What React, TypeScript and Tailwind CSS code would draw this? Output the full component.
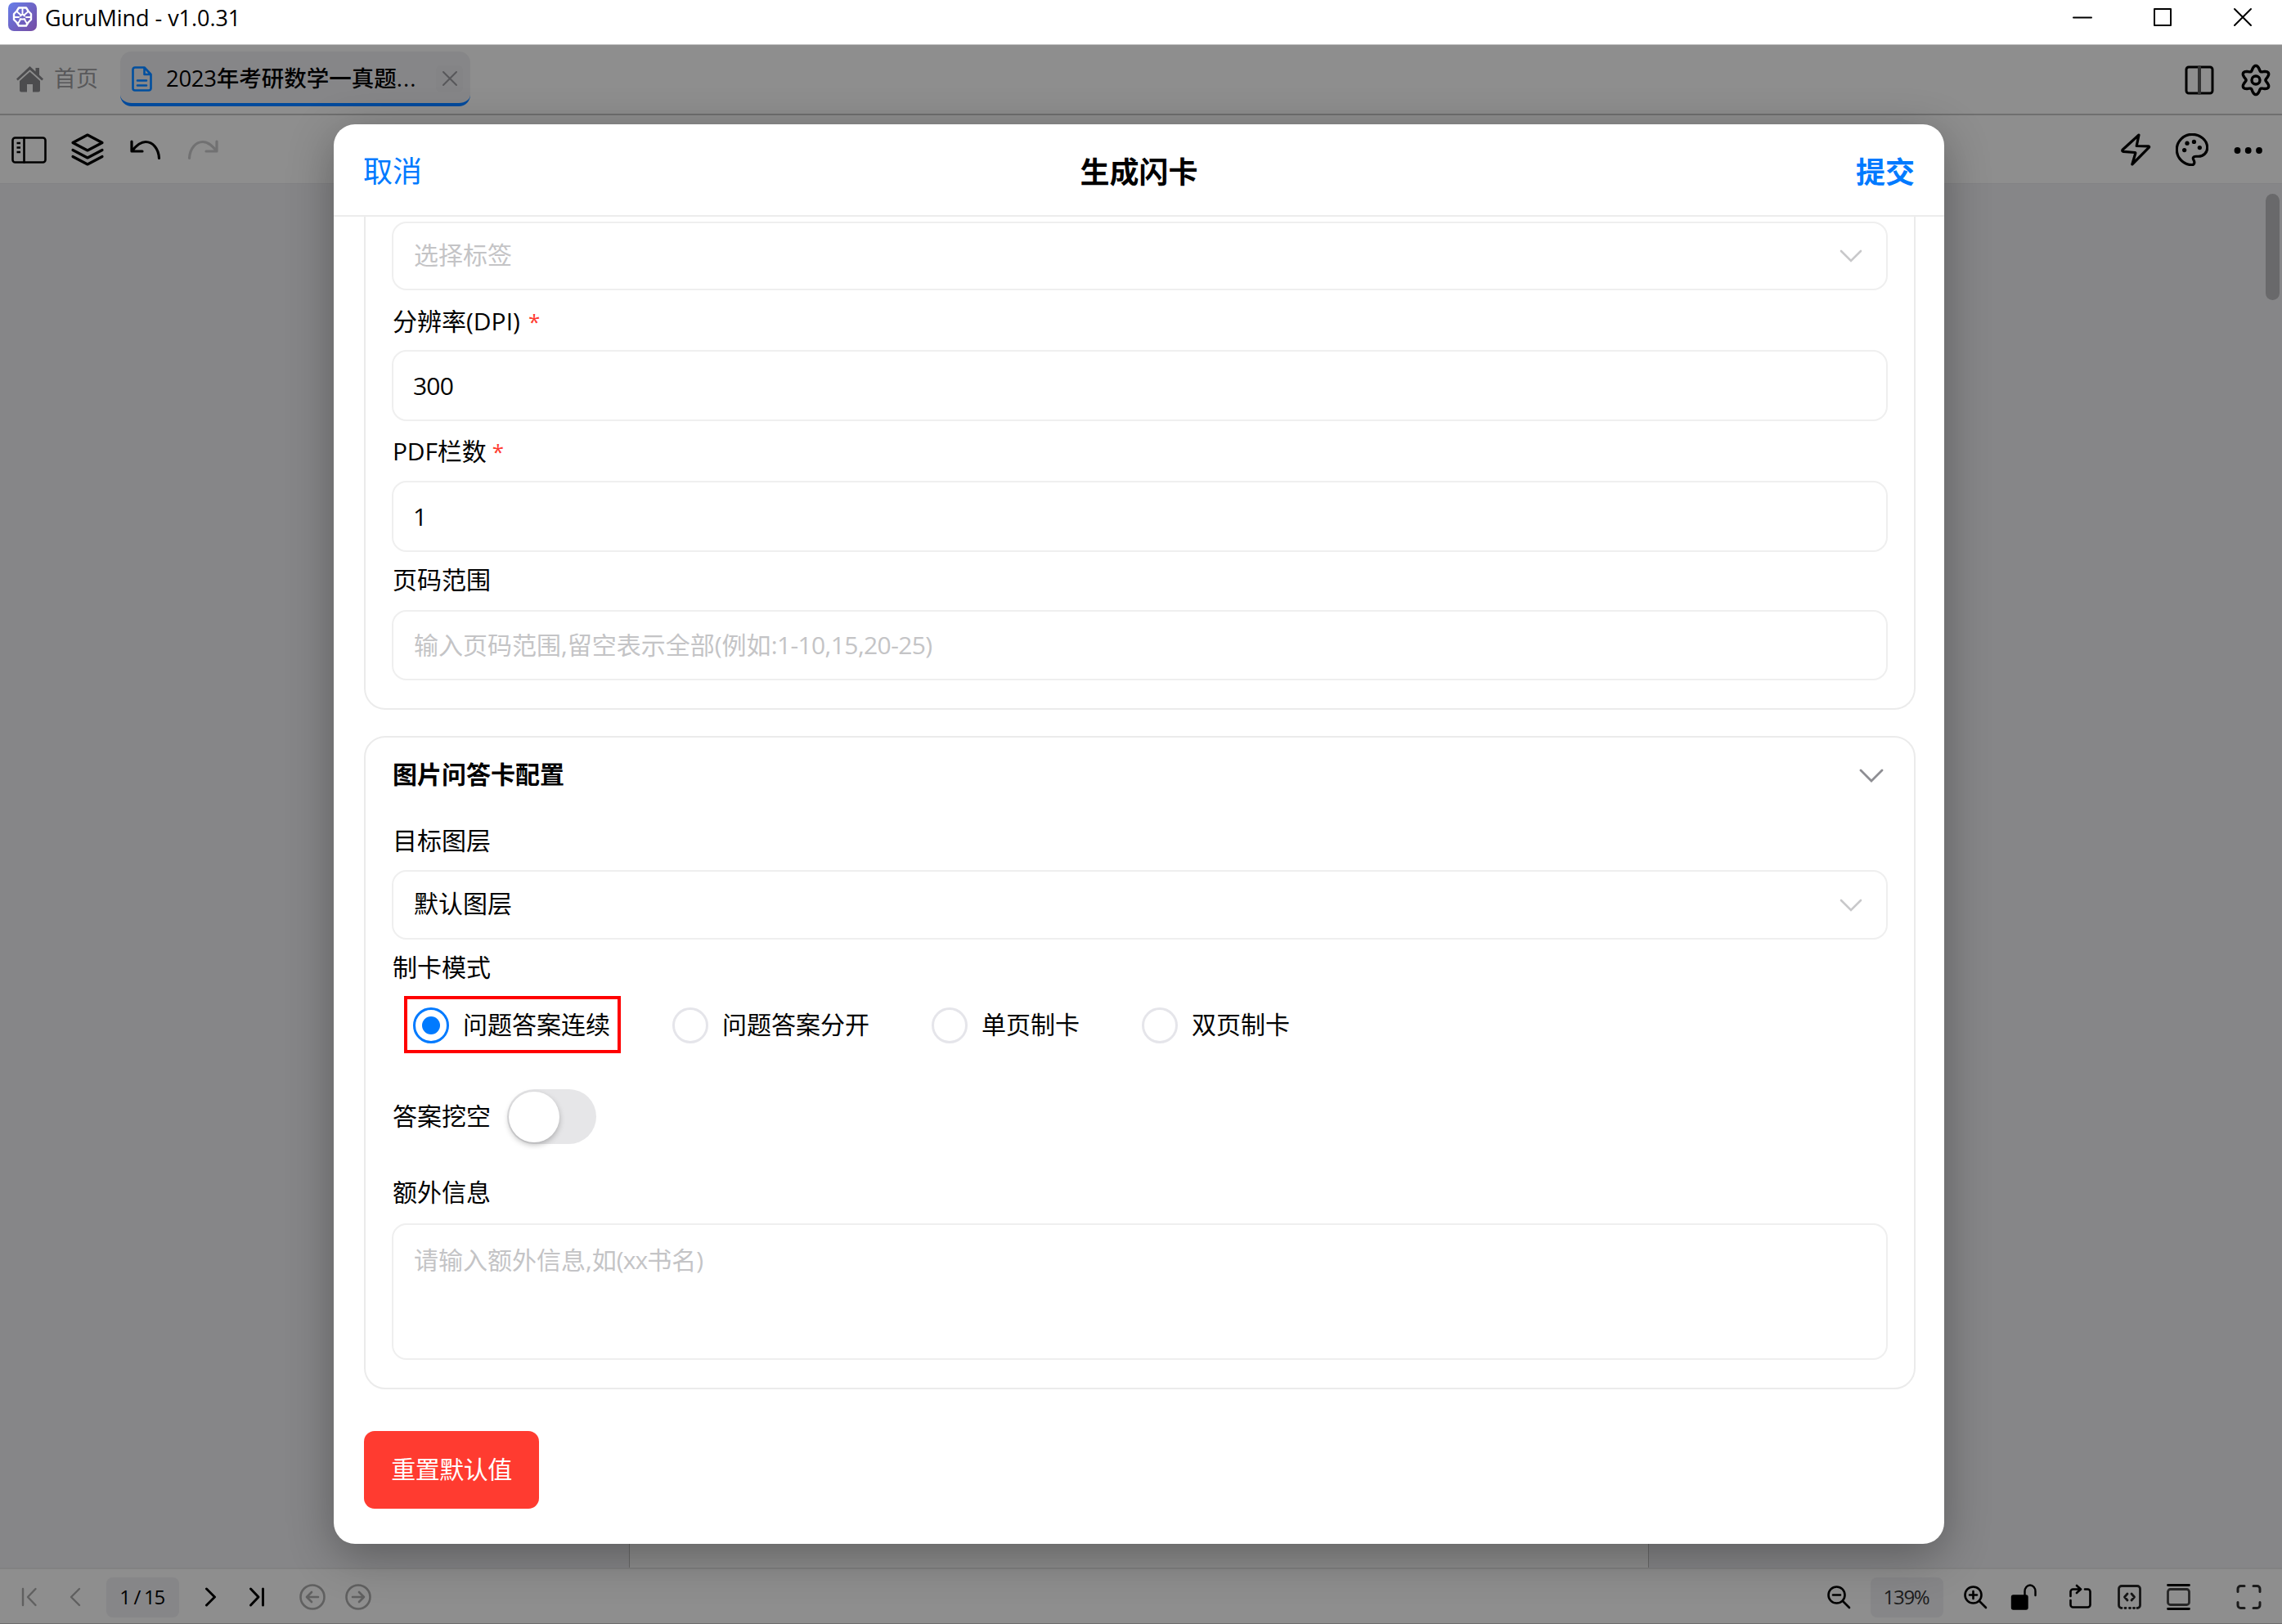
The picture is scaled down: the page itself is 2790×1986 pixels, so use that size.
import type { ReactNode } from 'react';

const gearPath = (() => {
  const pts: string[] = [];
  for (let i = 0; i < 120; i++) {
    const a = (i / 120) * Math.PI * 2 - Math.PI / 2;
    const r = 14.8 + 2.9 * Math.cos(6 * (a + Math.PI / 2));
    pts.push(`${(20 + r * Math.cos(a)).toFixed(2)} ${(20 + r * Math.sin(a)).toFixed(2)}`);
  }
  return `M${pts.join('L')}Z`;
})();

type IconProps = { w: number; h: number; sw?: number; className?: string; children: ReactNode };

// Stroke icon drawn at one unit per pixel.
function Icon({ w, h, sw = 3, className = '', children }: IconProps) {
  return (
    <svg
      width={w}
      height={h}
      viewBox={`0 0 ${w} ${h}`}
      fill="none"
      stroke="currentColor"
      strokeWidth={sw}
      strokeLinecap="round"
      strokeLinejoin="round"
      className={`shrink-0 overflow-visible ${className}`}
    >
      {children}
    </svg>
  );
}

function TitleBar() {
  return (
    <header className="flex h-[55px] shrink-0 items-start border-b border-[#c4c4c4] bg-white pl-[10px] text-black">
      <svg width="35" height="35" viewBox="0 0 35 35" className="mt-[3px] shrink-0">
        <defs>
          <linearGradient id="logo" x1="0" y1="0" x2="1" y2="1">
            <stop offset="0" stopColor="#667eea" />
            <stop offset="1" stopColor="#764ba2" />
          </linearGradient>
        </defs>
        <rect width="35" height="35" rx="7" fill="url(#logo)" />
        <path
          d="M13 6.500h9l2.500 4 3.500 3.500v7l-3.500 3.500-2.500 4h-9l-2.500-4L7 21v-7l3.500-3.500z"
          fill="none"
          stroke="#fff"
          strokeWidth="2.400"
          strokeLinejoin="round"
        />
        <path
          d="M17.500 8v5M11 11.500l4 3.500M24 11.500l-4 3.500M8 18h5M27 18h-5M12.500 25l3-5M22.500 25l-3-5M15 16.500l2.500-2.500 2.500 2.500M14.500 20.500h6"
          fill="none"
          stroke="#fff"
          strokeWidth="1.900"
          strokeLinecap="round"
        />
      </svg>
      <span className="ml-[10px] mt-[4px] text-[27px] leading-[36px] tracking-[-0.050px]">GuruMind - v1.0.31</span>
      <div className="ml-auto mr-[37px] mt-[10px] flex gap-[76px]">
        <Icon w={22} h={22} sw={2}>
          <path d="M0 11.500h22" />
        </Icon>
        <Icon w={22} h={22} sw={2}>
          <path d="M1 1h20v20H1z" />
        </Icon>
        <Icon w={22} h={22} sw={2}>
          <path d="M1 1l20 20M21 1L1 21" />
        </Icon>
      </div>
    </header>
  );
}

function TabBar() {
  return (
    <nav className="flex h-[86px] shrink-0 items-center border-b-2 border-[#6f6f6f] bg-[#8e8e8e] pl-[20px] pr-[12px]">
      <svg width="33" height="32" viewBox="0 0 33 32" className="shrink-0 text-[#4c4c4e]">
        <path d="M16.500 0L0 15.500l1.800 2L16.500 4.200l14.700 13.300 1.800-2-5-4.700V2h-4.500v4.600z" fill="currentColor" />
        <path d="M16.500 6.800L4 18v11.500A2 2 0 0 0 6 31.500h7V22h7v9.500h7a2 2 0 0 0 2-2V18z" fill="currentColor" />
      </svg>
      <span className="ml-[13px] pb-[2px] text-[27px] leading-[36px] text-[#58585a]">首页</span>
      <div className="ml-[27px] mt-[-1px] flex h-[67px] w-[428px] items-center rounded-[14px] border-b-4 border-[#004a9c] bg-[#868688] pl-[14px] pr-[9px] pt-[3px]">
        <Icon w={25} h={31} sw={2.6} className="text-[#004f9f]">
          <path d="M15.500 1.500H4A2.500 2.500 0 0 0 1.500 4v23A2.500 2.500 0 0 0 4 29.500h17a2.500 2.500 0 0 0 2.500-2.500V10zM15.500 1.500V10h8M7 17.500h11M7 23.500h11" />
        </Icon>
        <span className="ml-[17px] text-[27.5px] font-medium leading-[36px] text-black">
          <span className="tracking-[-0.300px]">2023</span>年考研数学一真题<span className="tracking-[1px]">...</span>
        </span>
        <span className="ml-auto flex h-[33px] w-[33px] shrink-0 items-center justify-center rounded-[6px] bg-[#848486] text-[#57575a]">
          <Icon w={18} h={18} sw={2}>
            <path d="M1 1l16 16M17 1L1 17" />
          </Icon>
        </span>
      </div>
      <div className="ml-auto flex items-center gap-[31px] pt-px text-black">
        <Icon w={36} h={36} sw={3}>
          <rect x="2" y="2" width="32" height="32" rx="3" />
          <path d="M18 2v32" strokeWidth="4" stroke="#333" />
        </Icon>
        <Icon w={40} h={40} sw={3.4}>
          <path d={gearPath} />
          <circle cx="20" cy="20" r="5" />
        </Icon>
      </div>
    </nav>
  );
}

function Toolbar() {
  return (
    <div className="flex h-[84px] shrink-0 items-center border-b border-[#828284] bg-[#8e8e8e] pl-[14px] pr-[24px] pt-px text-black">
      <Icon w={43} h={33} sw={2.6}>
        <rect x="1.500" y="1.500" width="40" height="30" rx="3" />
        <path d="M15.500 1.500v30" />
        <path d="M6.500 8h4.500M6.500 13.500h4.500M6.500 19h4.500" strokeLinecap="butt" />
      </Icon>
      <Icon w={40} h={40} sw={3.2} className="ml-[30px]">
        <path d="M20 2L38 11.500 20 21 2 11.500z" />
        <path d="M2 20.500L20 30l18-9.500M2 28.500L20 38l18-9.500" />
      </Icon>
      <Icon w={37} h={24} sw={3.2} className="ml-[32px]">
        <path d="M2 2v12h13M2.500 13.500C8 6.500 13 2.500 19 2.500 28 2.500 35 11 35.500 22.500" />
      </Icon>
      <Icon w={37} h={24} sw={3.2} className="ml-[34px] text-[#717172]">
        <path d="M35 2v12H22M34.500 13.500C29 6.500 24 2.500 18 2.500 9 2.500 2 11 1.500 22.500" />
      </Icon>
      <div className="ml-auto flex items-center gap-[31px]">
        <Icon w={36} h={40} sw={3.2}>
          <path d="M22 2L2 20.200q-1 1.800 1 2.200L17.200 23.500q.8.100.6 1L13.800 38 34.500 17.200q.6-1.200-.8-1.400L19.200 15.500z" />
        </Icon>
        <svg width="40" height="40" viewBox="1.300 1.300 21.400 21.400" fill="none" stroke="currentColor" strokeWidth="1.700" strokeLinejoin="round" className="shrink-0">
          <path d="M12 22a10 10 0 1 1 0-20c5.500 0 10 4 10 8.800 0 3.200-2.600 5.600-5.800 5.600h-1.700c-1.800 0-2.200 1-1.500 2.300.9 1.600.700 3.300-1 3.300z" />
          <g fill="currentColor" stroke="none">
            <circle cx="8.800" cy="7.800" r="1.400" />
            <circle cx="13.300" cy="6.900" r="1.400" />
            <circle cx="17" cy="10.700" r="1.400" />
            <circle cx="7" cy="12.300" r="1.400" />
          </g>
        </svg>
        <svg width="35" height="10" viewBox="0 0 35 10" fill="currentColor" className="shrink-0">
          <circle cx="4.500" cy="6" r="3.900" />
          <circle cx="17.700" cy="6" r="3.900" />
          <circle cx="31" cy="6" r="3.900" />
        </svg>
      </div>
    </div>
  );
}

function Canvas() {
  return (
    <div className="flex min-h-0 flex-1 justify-between bg-[#868688]">
      <div className="w-[769px]" />
      <div className="w-[1247px] border-x border-[#6a6a6a] bg-[#8e8e8e]" />
      <div className="flex flex-1 justify-end pr-[3px] pt-[12px]">
        <div className="h-[130px] w-[17px] rounded-full bg-[#69696b]" />
      </div>
    </div>
  );
}

function StatusBar() {
  return (
    <footer className="flex h-[69px] shrink-0 items-center border-b border-t-2 border-b-[#6c6c6c] border-t-[#828282] bg-[#8e8e8e] pl-[26px] pr-[25px] pt-[2px] text-black">
      <Icon w={19} h={22} sw={2.4} className="text-[#606060]">
        <path d="M2 1v20M17.500 1L8 11l9.500 10" />
      </Icon>
      <Icon w={13} h={22} sw={2.4} className="ml-[40px] text-[#606060]">
        <path d="M12 1L2 11l10 10" />
      </Icon>
      <span className="ml-[32px] flex h-[49px] w-[89px] items-center justify-center rounded-[8px] bg-[#868688] pr-[2px] text-[24px] font-medium tracking-[-1.300px]">
        1 / 15
      </span>
      <Icon w={13} h={22} sw={3} className="ml-[32px]">
        <path d="M1.500 1l10 10-10 10" />
      </Icon>
      <Icon w={18} h={22} sw={3} className="ml-[41px]">
        <path d="M1.500 1l9.500 10-9.500 10M16.500 1v20" />
      </Icon>
      <Icon w={32} h={32} sw={2.6} className="ml-[43px] text-[#606060]">
        <circle cx="16" cy="16" r="14.500" />
        <path d="M23 16H9M15 10l-6 6 6 6" />
      </Icon>
      <Icon w={32} h={32} sw={2.6} className="ml-[24px] text-[#606060]">
        <circle cx="16" cy="16" r="14.500" />
        <path d="M9 16H23M17 10l6 6-6 6" />
      </Icon>

      <Icon w={28} h={28} sw={2.6} className="ml-auto">
        <circle cx="11.500" cy="11.500" r="10" />
        <path d="M19 19l8 8M7 11.500h9" />
      </Icon>
      <span className="ml-[25px] flex h-[49px] w-[89px] items-center justify-center rounded-[8px] bg-[#868688] pr-[2px] text-[24px] tracking-[-1.300px] text-[#1c1c1c]">
        139%
      </span>
      <Icon w={28} h={28} sw={2.6} className="ml-[25px]">
        <circle cx="11.500" cy="11.500" r="10" />
        <path d="M19 19l8 8M7 11.500h9M11.500 7v9" />
      </Icon>
      <Icon w={31} h={32} sw={2.4} className="ml-[30px]">
        <rect x="1" y="14.500" width="18.500" height="16" rx="1.500" fill="currentColor" />
        <path d="M16.500 14V9a6.500 7.500 0 0 1 13 0v5" />
      </Icon>
      <Icon w={27} h={30} sw={2.6} className="ml-[40px]">
        <path d="M1.500 14v-5.500A3 3 0 0 1 4.500 5.500H13M9 1l5 4.500-5 4.500M19 5.500h3.500a3 3 0 0 1 3 3v16a3 3 0 0 1-3 3h-18a3 3 0 0 1-3-3V19" />
      </Icon>
      <Icon w={29} h={30} sw={2.8} className="ml-[32px] text-[#151515]">
        <path d="M5 28.500A3.500 3.500 0 0 1 1.500 25V5A3.500 3.500 0 0 1 5 1.500h19A3.500 3.500 0 0 1 27.500 5v20a3.500 3.500 0 0 1-3.500 3.500" />
        <path d="M12 11l-3.500 4 3.500 4M17 11l3.500 4-3.500 4" />
        <path d="M9 28.500h1M14.500 28.500h1M19.500 28.500h1" />
      </Icon>
      <Icon w={29} h={32} sw={2.8} className="ml-[31px]">
        <path d="M1.500 1.500h26M1.500 30.500h26" />
        <rect x="1.500" y="6.500" width="26" height="19" rx="3" stroke="#262626" />
      </Icon>
      <Icon w={31} h={30} sw={3} className="ml-[56px] text-[#1c1c1c]">
        <path d="M2 8.500V5a3.500 3.500 0 0 1 3.500-3.500H10M21 1.500h4.500A3.500 3.500 0 0 1 29 5v3.500M29 21.500V25a3.500 3.500 0 0 1-3.500 3.500H21M10 28.500H5.500A3.500 3.500 0 0 1 2 25v-3.500" />
      </Icon>
    </footer>
  );
}

function SelectBox({ text, placeholder = false, className }: { text: string; placeholder?: boolean; className: string }) {
  return (
    <div className={`flex items-center justify-between rounded-[18px] border-2 border-[#efefef] pl-[25px] pr-[30px] ${className}`}>
      <span className={`pb-[3px] ${placeholder ? 'text-[#c4c4c6]' : 'text-black'}`}>{text}</span>
      <Icon w={26} h={14} sw={2.6} className="text-[#c8c8ca]">
        <path d="M1 1l12 12L25 1" strokeLinejoin="miter" />
      </Icon>
    </div>
  );
}

function TextBox({ children, placeholder = false, className }: { children: ReactNode; placeholder?: boolean; className: string }) {
  return (
    <div
      className={`flex rounded-[18px] border-2 border-[#efefef] ${placeholder ? 'pl-[25px] text-[#c4c4c6]' : 'pl-[24px] text-black'} ${className}`}
    >
      {children}
    </div>
  );
}

function Radio({ label, checked = false }: { label: string; checked?: boolean }) {
  return (
    <label
      className={`flex h-[70px] items-center gap-[17px] border-4 pl-[7px] pr-[9px] pt-[2px] ${checked ? 'border-[#ff0000]' : 'border-transparent'}`}
    >
      <span
        className={`flex h-[44px] w-[44px] items-center justify-center rounded-full border-[3.500px] ${checked ? 'border-[#007aff]' : 'border-[#e5e5ea]'}`}
      >
        {checked && <span className="h-[22px] w-[22px] rounded-full bg-[#007aff]" />}
      </span>
      <span className="pb-[2px]">{label}</span>
    </label>
  );
}

const Required = ({ className }: { className: string }) => (
  <span className={`text-[26px] text-[#ff3b30] ${className}`}>*</span>
);

function Dialog() {
  return (
    <div
      role="dialog"
      className="absolute left-[408px] top-[152px] flex h-[1736px] w-[1969px] flex-col overflow-hidden rounded-[26px] bg-white text-[30px] leading-[40px] text-black shadow-[0_14px_56px_rgba(0,0,0,0.32)]"
    >
      <div className="grid h-[113px] shrink-0 grid-cols-3 items-center border-b-2 border-[#ececec] px-[36px] pt-[4px] text-[36px] leading-[48px]">
        <span className="text-[#007aff]">取消</span>
        <span className="pt-[2px] text-center font-bold">生成闪卡</span>
        <span className="pt-[2px] text-right font-bold text-[#007aff]">提交</span>
      </div>
      <div className="flex flex-col items-stretch pl-[37px] pr-[35px]">
        <section className="flex h-[603px] flex-col rounded-b-[26px] border-x-2 border-b-2 border-[#ebebeb] px-[32px] pt-[6px]">
          <SelectBox text="选择标签" placeholder className="h-[84px]" />
          <div className="flex h-[73px] items-center pl-px pt-[2px]">
            分辨率<span className="font-medium">(DPI)</span>
            <Required className="ml-[10px]" />
          </div>
          <TextBox className="h-[87px] items-center tracking-[-0.800px]">300</TextBox>
          <div className="flex h-[73px] items-center pl-px">
            <span className="font-medium tracking-[-0.200px]">PDF</span>栏数
            <Required className="ml-[7px]" />
          </div>
          <TextBox className="h-[87px] items-center">1</TextBox>
          <div className="flex h-[71px] items-center pb-[3px] pl-px">页码范围</div>
          <TextBox placeholder className="h-[86px] items-center">
            <span>
              输入页码范围,留空表示全部(例如<span className="tracking-[-0.600px]">:1-10,15,20-25)</span>
            </span>
          </TextBox>
        </section>

        <section className="mt-[32px] flex h-[799px] flex-col rounded-[26px] border-2 border-[#ebebeb] px-[32px]">
          <div className="flex h-[92px] items-center justify-between pl-px pr-[6px] font-bold">
            <span className="pb-[2px]">图片问答卡配置</span>
            <Icon w={28} h={15} sw={2.8} className="text-[#8e8e93]">
              <path d="M1 1l13 13L27 1" strokeLinejoin="miter" />
            </Icon>
          </div>
          <div className="flex h-[70px] items-center pb-[2px] pl-px">目标图层</div>
          <SelectBox text="默认图层" className="h-[85px]" />
          <div className="flex h-[69px] items-center pb-[2px] pl-px">制卡模式</div>
          <div className="ml-[15px] flex gap-[52px]">
            <Radio label="问题答案连续" checked />
            <Radio label="问题答案分开" />
            <Radio label="单页制卡" />
            <Radio label="双页制卡" />
          </div>
          <div className="mt-[44px] flex h-[67px] items-center pl-px">
            <span className="pb-[2px]">答案挖空</span>
            <span className="ml-[20px] flex h-[67px] w-[109px] items-center rounded-full bg-[#e6e6e8] pl-[2px]">
              <span className="h-[62px] w-[62px] rounded-full bg-white shadow-[0_3px_7px_rgba(0,0,0,0.25)]" />
            </span>
          </div>
          <div className="flex h-[97px] items-center pl-px pt-[20px]">额外信息</div>
          <TextBox placeholder className="h-[167px] items-start pt-[23px]">
            <span>
              请输入额外信息,如<span className="tracking-[-0.900px]">(xx</span>书名)
            </span>
          </TextBox>
        </section>

        <button className="mt-[51px] flex h-[95px] w-[214px] items-center justify-center rounded-[13px] bg-[#ff3b30] pb-px tracking-[-0.500px] text-white">
          重置默认值
        </button>
      </div>
    </div>
  );
}

export default function App() {
  return (
    <div className="relative flex h-[1986px] w-[2790px] flex-col overflow-hidden font-['Open_Sans','Noto_Sans_CJK_SC',sans-serif]">
      <TitleBar />
      <TabBar />
      <Toolbar />
      <Canvas />
      <StatusBar />
      <Dialog />
    </div>
  );
}
